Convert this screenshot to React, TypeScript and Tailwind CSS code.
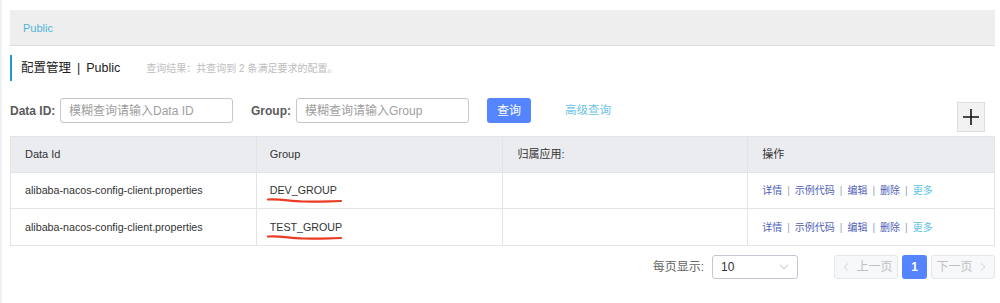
import { ChevronDown, ChevronLeft, ChevronRight } from "lucide-react";

const font = { fontFamily: '"Liberation Sans", Arial, "Noto Sans CJK SC", sans-serif' };

const rows = [
  { id: "alibaba-nacos-config-client.properties", group: "DEV_GROUP" },
  { id: "alibaba-nacos-config-client.properties", group: "TEST_GROUP" },
];

function Scribble() {
  return (
    <svg className="absolute left-[-3px] top-[15px]" width="76" height="7" viewBox="0 0 76 7">
      <path d="M1 2.5 C 12 1.5, 22 4, 36 4.5 S 62 4.2, 74 4" fill="none" stroke="#ec3b24" strokeWidth="2.2" strokeLinecap="round" />
    </svg>
  );
}

function Actions() {
  const sep = <span className="mx-[5px] text-[#9aa0b8]">|</span>;
  return (
    <div className="flex items-center text-[10px] text-[#4f5fb8]">
      <span>详情</span>
      {sep}
      <span>示例代码</span>
      {sep}
      <span>编辑</span>
      {sep}
      <span>删除</span>
      {sep}
      <span className="text-[#5bc3e4]">更多</span>
    </div>
  );
}

export default function App() {
  return (
    <div style={font} className="w-[1000px] h-[303px] bg-white border-l-2 border-[#eef0f3] pl-[8px] pr-[5px] pt-[10px] text-[#333]">
      <div className="h-[36px] bg-[#eeeeee] border-b border-[#dcdcdc] flex items-center pl-[13px] pt-[2px]">
        <span className="text-[11px] text-[#4fb5dd]">Public</span>
      </div>

      <div className="mt-[9px] h-[26px] border-l-[2px] border-[#1a9ad6] flex items-center pl-[9px] text-[12.5px] text-[#222]">
        <span>配置管理</span>
        <span className="mx-[6px]">|</span>
        <span>Public</span>
        <span className="ml-[26px] text-[10px] text-[#bdbdbd]">查询结果：共查询到 2 条满足要求的配置。</span>
      </div>

      <div className="mt-[17px] flex items-start">
        <div className="flex items-center h-[25px]">
          <span className="text-[12px] font-bold text-[#5a5a5a] w-[50px]">Data ID:</span>
          <div className="w-[173px] h-[25px] border border-[#c4c6cf] rounded-[3px] flex items-center px-[8px] text-[12px] text-[#a0a0a0]">
            模糊查询请输入Data ID
          </div>
          <span className="ml-[18px] text-[12px] font-bold text-[#5a5a5a] w-[45px]">Group:</span>
          <div className="w-[173px] h-[25px] border border-[#c4c6cf] rounded-[3px] flex items-center px-[8px] text-[12px] text-[#a0a0a0]">
            模糊查询请输入Group
          </div>
          <button className="ml-[18px] w-[44px] h-[25px] rounded-[3px] bg-[#5584ff] text-white text-[12px]">查询</button>
          <span className="ml-[34px] text-[11.5px] text-[#6cc4e2]">高级查询</span>
        </div>
        <div className="ml-auto mr-[10px] mt-[4px] w-[28px] h-[30px] bg-[#f2f2f2] border border-[#dedede] flex items-center justify-center">
          <svg width="18" height="18" viewBox="0 0 18 18">
            <path d="M9 1 V17 M1 9 H17" stroke="#111" strokeWidth="1.6" />
          </svg>
        </div>
      </div>

      <div className="mt-[4px] border border-[#e3e4e8]">
        <div className="grid grid-cols-4 h-[36px] bg-[#ebecf0] text-[11px] text-[#333] border-b border-[#e3e4e8]">
          <div className="flex items-center px-[14px] border-r border-[#e3e4e8]">Data Id</div>
          <div className="flex items-center px-[13px] border-r border-[#e3e4e8]">Group</div>
          <div className="flex items-center px-[15px] border-r border-[#e3e4e8]">归属应用:</div>
          <div className="flex items-center px-[14px]">操作</div>
        </div>
        {rows.map((r, i) => (
          <div key={r.group} className={`grid grid-cols-4 h-[36px] text-[10.7px] text-[#333] ${i === 0 ? "border-b border-[#e3e4e8]" : ""}`}>
            <div className="flex items-center px-[14px] border-r border-[#e3e4e8]">{r.id}</div>
            <div className="flex items-center px-[13px] border-r border-[#e3e4e8]">
              <span className="relative">
                {r.group}
                <Scribble />
              </span>
            </div>
            <div className="border-r border-[#e3e4e8]"></div>
            <div className="flex items-center px-[14px]">
              <Actions />
            </div>
          </div>
        ))}
      </div>

      <div className="mt-[9px] flex items-center justify-end">
        <span className="text-[12px] text-[#666]">每页显示:</span>
        <div className="ml-[8px] w-[86px] h-[24px] border border-[#c4c6cf] rounded-[3px] flex items-center justify-between pl-[8px] pr-[6px]">
          <span className="text-[12px] text-[#333]">10</span>
          <ChevronDown size={14} strokeWidth={1.2} className="text-[#999]" />
        </div>
        <div className="ml-[36px] w-[64px] h-[24px] border border-[#e6e7eb] bg-[#f7f8fa] rounded-[3px] flex items-center justify-center text-[12px] text-[#c0c0c0]">
          <ChevronLeft size={14} strokeWidth={1.2} />
          <span className="ml-[3px]">上一页</span>
        </div>
        <div className="ml-[4px] w-[25px] h-[24px] rounded-[3px] bg-[#5584ff] text-white text-[12px] font-bold flex items-center justify-center">1</div>
        <div className="ml-[4px] w-[64px] h-[24px] border border-[#e6e7eb] bg-[#f7f8fa] rounded-[3px] flex items-center justify-center text-[12px] text-[#c0c0c0]">
          <span className="mr-[3px]">下一页</span>
          <ChevronRight size={14} strokeWidth={1.2} />
        </div>
      </div>
    </div>
  );
}
